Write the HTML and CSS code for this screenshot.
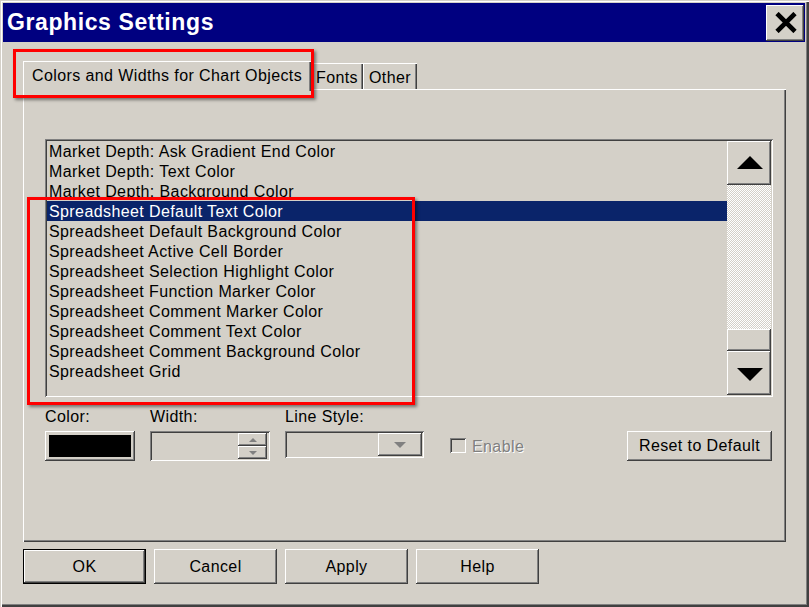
FILE: index.html
```html
<!DOCTYPE html>
<html>
<head>
<meta charset="utf-8">
<link rel="stylesheet" href="styles.css">
</head>
<body>
<div class="window">
  <div class="titlebar">
    <span class="title">Graphics Settings</span>
    <div class="close raised">
      <svg width="22" height="21" viewBox="0 0 22 21"><path d="M2 1.5 L20 19.5 M20 1.5 L2 19.5" stroke="#000" stroke-width="4.6" fill="none"/></svg>
    </div>
  </div>
  <div class="content">
    <div class="tabs">
      <div class="tab active">Colors and Widths for Chart Objects</div>
      <div class="tab fonts">Fonts</div>
      <div class="tab other">Other</div>
    </div>
    <div class="panel">
      <div class="listbox">
        <ul class="items">
          <li>Market Depth: Ask Gradient End Color</li>
          <li>Market Depth: Text Color</li>
          <li>Market Depth: Background Color</li>
          <li class="selected">Spreadsheet Default Text Color</li>
          <li>Spreadsheet Default Background Color</li>
          <li>Spreadsheet Active Cell Border</li>
          <li>Spreadsheet Selection Highlight Color</li>
          <li>Spreadsheet Function Marker Color</li>
          <li>Spreadsheet Comment Marker Color</li>
          <li>Spreadsheet Comment Text Color</li>
          <li>Spreadsheet Comment Background Color</li>
          <li>Spreadsheet Grid</li>
        </ul>
        <div class="scrollbar">
          <div class="sb-btn raised"><svg width="26" height="13" viewBox="0 0 26 13"><path d="M13 0 L26 13 L0 13 Z" fill="#000"/></svg></div>
          <div class="sb-track"></div>
          <div class="sb-thumb raised"></div>
          <div class="sb-btn down raised"><svg width="26" height="13" viewBox="0 0 26 13"><path d="M0 0 L26 0 L13 13 Z" fill="#000"/></svg></div>
        </div>
      </div>
      <div class="props">
        <div class="field">
          <div class="label">Color:</div>
          <div class="swatch raised"><span class="swatch-fill"></span></div>
        </div>
        <div class="field width-field">
          <div class="label">Width:</div>
          <div class="spinbox sunken">
            <div class="spins">
              <div class="spin raised"><span class="tri-up"></span></div>
              <div class="spin raised"><span class="tri-down"></span></div>
            </div>
          </div>
        </div>
        <div class="field style-field">
          <div class="label">Line Style:</div>
          <div class="combo sunken">
            <div class="drop raised"><span class="tri-drop"></span></div>
          </div>
        </div>
        <div class="check">
          <span class="checkbox"></span>
          <span class="check-text">Enable</span>
        </div>
        <div class="btn reset raised">Reset to Default</div>
      </div>
    </div>
    <div class="actions">
      <div class="btn default">OK</div>
      <div class="btn raised">Cancel</div>
      <div class="btn raised">Apply</div>
      <div class="btn raised">Help</div>
    </div>
  </div>
  <div class="mark mark-tab"></div>
  <div class="mark mark-list"></div>
</div>
</body>
</html>
```

FILE: styles.css
```css
html, body {
  margin: 0;
  padding: 0;
  background: #d4d0c8;
}

body {
  font-family: "Liberation Sans", Arial, sans-serif;
  font-size: 16px;
  letter-spacing: 0.4px;
  color: #000;
}

.window {
  position: relative;
  width: 809px;
  height: 607px;
  box-sizing: border-box;
  padding: 3px;
  background: #d4d0c8;
  box-shadow: inset 1px 1px #d4d0c8, inset 2px 2px #fff,
              inset -1px -1px #404040, inset -2px -2px #404040, inset -3px -3px #808080;
}

.raised {
  background: #d4d0c8;
  box-shadow: inset -1px -1px #404040, inset 1px 1px #fff,
              inset -2px -2px #808080, inset 2px 2px #d4d0c8;
}

.sunken {
  background: #d4d0c8;
  box-shadow: inset 1px 1px #808080, inset -1px -1px #fff,
              inset 2px 2px #404040, inset -2px -2px #d4d0c8;
}

/* Title bar */
.titlebar {
  height: 39px;
  margin-right: 1px;
  background: #000080;
  display: flex;
  align-items: flex-start;
  justify-content: space-between;
  padding-left: 4px;
}

.title {
  color: #fff;
  font-weight: bold;
  font-size: 23px;
  letter-spacing: 0.6px;
  line-height: 39px;
}

.close {
  width: 38px;
  height: 36px;
  margin-top: 2px;
  margin-right: 1px;
  box-sizing: border-box;
  padding: 7px 0 0 9px;
}

.close svg {
  display: block;
}

/* Content */
.content {
  padding: 19px 20px 0;
}

.tabs {
  display: flex;
  align-items: flex-end;
  height: 28px;
}

.tab {
  box-sizing: border-box;
  height: 26px;
  padding-top: 5px;
  line-height: 19px;
  white-space: nowrap;
  background: #d4d0c8;
  box-shadow: inset 1px 1px #fff, inset -1px 0 #404040, inset -2px 0 #808080;
}

.tab.active {
  position: relative;
  z-index: 1;
  width: 288px;
  height: 30px;
  margin-bottom: -2px;
  padding-left: 9px;
}

.tab.fonts {
  width: 51px;
  margin-left: 1px;
  padding-left: 4px;
}

.tab.other {
  width: 54px;
  padding-left: 6px;
}

.panel {
  height: 453px;
  box-sizing: border-box;
  padding: 50px 13px 0 22px;
  box-shadow: inset 1px 1px #fff, inset -1px -1px #404040, inset -2px -2px #808080;
}

/* List */
.listbox {
  display: flex;
  height: 258px;
  box-sizing: border-box;
  padding: 2px;
  background: #d4d0c8;
  box-shadow: inset 1px 1px #808080, inset -1px -1px #fff,
              inset 2px 2px #404040, inset -2px -2px #d4d0c8;
}

.items {
  flex: 1;
  margin: 0;
  padding: 0;
  list-style: none;
  overflow: hidden;
}

.items li {
  height: 20px;
  line-height: 21px;
  padding-left: 2px;
  white-space: nowrap;
}

.items li.selected {
  background: #0a246a;
  color: #fff;
}

.scrollbar {
  width: 44px;
  display: flex;
  flex-direction: column;
}

.sb-btn {
  height: 44px;
  flex: none;
  box-sizing: border-box;
  display: flex;
  justify-content: center;
  padding-top: 15px;
}

.sb-btn.down {
  padding-top: 17px;
}

.sb-btn svg {
  display: block;
  margin-left: 1px;
}

.sb-track {
  flex: 1;
  background: repeating-conic-gradient(#d4d0c8 0 25%, #fff 0 50%) 0 0 / 2px 2px;
}

.sb-thumb {
  height: 22px;
  flex: none;
}

/* Properties row */
.props {
  display: flex;
  align-items: flex-start;
  margin-top: 10px;
}

.field {
  display: flex;
  flex-direction: column;
}

.label {
  line-height: 19px;
  margin-bottom: 5px;
}

.swatch {
  width: 90px;
  height: 30px;
  box-sizing: border-box;
  padding: 4px;
}

.swatch-fill {
  display: block;
  height: 100%;
  background: #000;
}

.width-field {
  margin-left: 15px;
}

.spinbox {
  width: 120px;
  height: 30px;
  box-sizing: border-box;
  padding: 2px 3px 2px 2px;
  display: flex;
  justify-content: flex-end;
}

.spins {
  width: 29px;
  display: flex;
  flex-direction: column;
}

.spin {
  height: 13px;
  display: flex;
  align-items: center;
  justify-content: center;
}

.tri-up {
  width: 0;
  height: 0;
  border-left: 4px solid transparent;
  border-right: 4px solid transparent;
  border-bottom: 4px solid #808080;
}

.tri-down {
  width: 0;
  height: 0;
  border-left: 4px solid transparent;
  border-right: 4px solid transparent;
  border-top: 4px solid #808080;
}

.style-field {
  margin-left: 15px;
}

.combo {
  width: 139px;
  height: 27px;
  box-sizing: border-box;
  padding: 2px 2px 2px 2px;
  display: flex;
  justify-content: flex-end;
}

.drop {
  width: 44px;
  height: 23px;
  display: flex;
  align-items: center;
  justify-content: center;
}

.tri-drop {
  width: 0;
  height: 0;
  border-left: 6px solid transparent;
  border-right: 6px solid transparent;
  border-top: 6px solid #808080;
}

.check {
  display: flex;
  align-items: flex-start;
  margin-left: 26px;
  margin-top: 30px;
}

.checkbox {
  width: 16px;
  height: 15px;
  margin-top: 1px;
  margin-right: 6px;
  box-sizing: border-box;
  background: #d4d0c8;
  box-shadow: inset 1px 1px #808080, inset -1px -1px #fff,
              inset 2px 2px #404040, inset -2px -2px #d4d0c8;
}

.check-text {
  line-height: 19px;
  color: #808080;
  text-shadow: 1px 1px #fff;
}

.btn {
  box-sizing: border-box;
  display: flex;
  align-items: center;
  justify-content: center;
  white-space: nowrap;
}

.reset {
  width: 145px;
  height: 30px;
  margin-left: auto;
  margin-right: 1px;
  margin-top: 24px;
}

/* Bottom buttons */
.actions {
  display: flex;
  gap: 8px;
  margin-top: 7px;
}

.actions .btn {
  width: 123px;
  height: 35px;
}

.actions .btn.default {
  background: #d4d0c8;
  box-shadow: inset 0 0 0 1px #000, inset -2px -2px #404040, inset 2px 2px #fff,
              inset -3px -3px #808080;
}

/* Annotation boxes */
.mark {
  position: absolute;
  border: 3px solid #ff0000;
  box-shadow: 2px 2px 3px rgba(0, 0, 0, 0.45);
  pointer-events: none;
  z-index: 5;
}

.mark-tab {
  left: 13px;
  top: 49px;
  width: 295px;
  height: 43px;
}

.mark-list {
  left: 27px;
  top: 197px;
  width: 382px;
  height: 202px;
}
```
